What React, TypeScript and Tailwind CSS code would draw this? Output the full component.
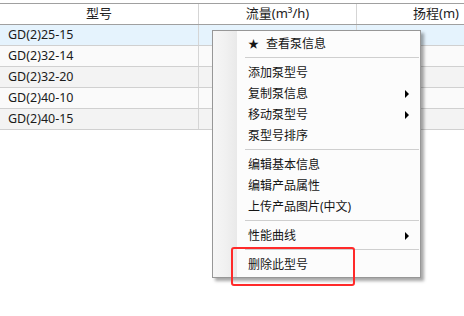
const ROWS = ["GD(2)25-15", "GD(2)32-14", "GD(2)32-20", "GD(2)40-10", "GD(2)40-15"];

type Item = { label: string; star?: boolean; sub?: boolean } | "sep";

const MENU: Item[] = [
  { label: "查看泵信息", star: true },
  "sep",
  { label: "添加泵型号" },
  { label: "复制泵信息", sub: true },
  { label: "移动泵型号", sub: true },
  { label: "泵型号排序" },
  "sep",
  { label: "编辑基本信息" },
  { label: "编辑产品属性" },
  { label: "上传产品图片(中文)" },
  "sep",
  { label: "性能曲线", sub: true },
  "sep",
  { label: "删除此型号" },
];

const rowBg = (i: number) =>
  i === 0 ? "bg-[#e5f3fd]" : i % 2 === 1 ? "bg-[#fafafa]" : "bg-[#f3f3f3]";

function Grid() {
  return (
    <div className="mt-[3px] border-t border-[#a0a0a0]">
      <div className="grid h-[21px] grid-cols-[199px_158px_1fr] border-b border-[#a0a0a0] bg-white text-[13px] text-[#222]">
        <div className="flex items-center justify-center border-r border-[#d5d5d5]">型号</div>
        <div className="flex items-center justify-center border-r border-[#d5d5d5]">流量(m³/h)</div>
        <div className="flex w-[158px] items-center justify-center">扬程(m)</div>
      </div>
      {ROWS.map((r, i) => (
        <div
          key={r}
          className={`grid h-[21px] grid-cols-[199px_158px_1fr] border-b border-[#d0d0d0] text-[12.5px] text-[#1b1b1b] ${rowBg(i)}`}
        >
          <div className="flex items-center border-r border-[#d5d5d5] pl-[8px]">{r}</div>
          <div className="border-r border-[#d5d5d5]" />
          <div />
        </div>
      ))}
    </div>
  );
}

function Menu() {
  return (
    <div className="absolute left-[212px] top-[30px] w-[209px] border border-[#979797] bg-[#fcfcfc] shadow-[3px_3px_3px_rgba(0,0,0,0.35)]">
      <div className="relative py-[2px]">
        <div className="absolute bottom-0 left-0 top-0 w-[24px] bg-gradient-to-r from-[#f6f6f6] via-[#f1f1f1] to-[#e9e9e9]" />
        {MENU.map((m, i) =>
          m === "sep" ? (
            <div key={i} className="relative ml-[32px] mr-[1px] h-[8px] pt-[3px]">
              <div className="h-px bg-[#cfcfcf]" />
            </div>
          ) : (
            <div
              key={i}
              className="relative flex h-[21px] items-center pl-[35px] pr-[11px] text-[12px] text-[#151515]"
            >
              {m.star ? (
                <>
                  <span className="w-[18px] text-[11px] leading-none">★</span>
                  <span>{m.label}</span>
                </>
              ) : (
                <span>{m.label}</span>
              )}
              {m.sub && (
                <span className="ml-auto h-0 w-0 border-y-[4px] border-l-[4px] border-y-transparent border-l-black" />
              )}
            </div>
          )
        )}
      </div>
    </div>
  );
}

export default function App() {
  return (
    <div
      className="relative h-[316px] w-[464px] overflow-hidden bg-white"
      style={{ fontFamily: '"Noto Sans", "Noto Sans CJK SC", sans-serif' }}
    >
      <Grid />
      <Menu />
      <div className="absolute left-[231px] top-[247px] h-[39px] w-[124px] rounded-[3px] border-2 border-[#ff2a2a]" />
    </div>
  );
}
